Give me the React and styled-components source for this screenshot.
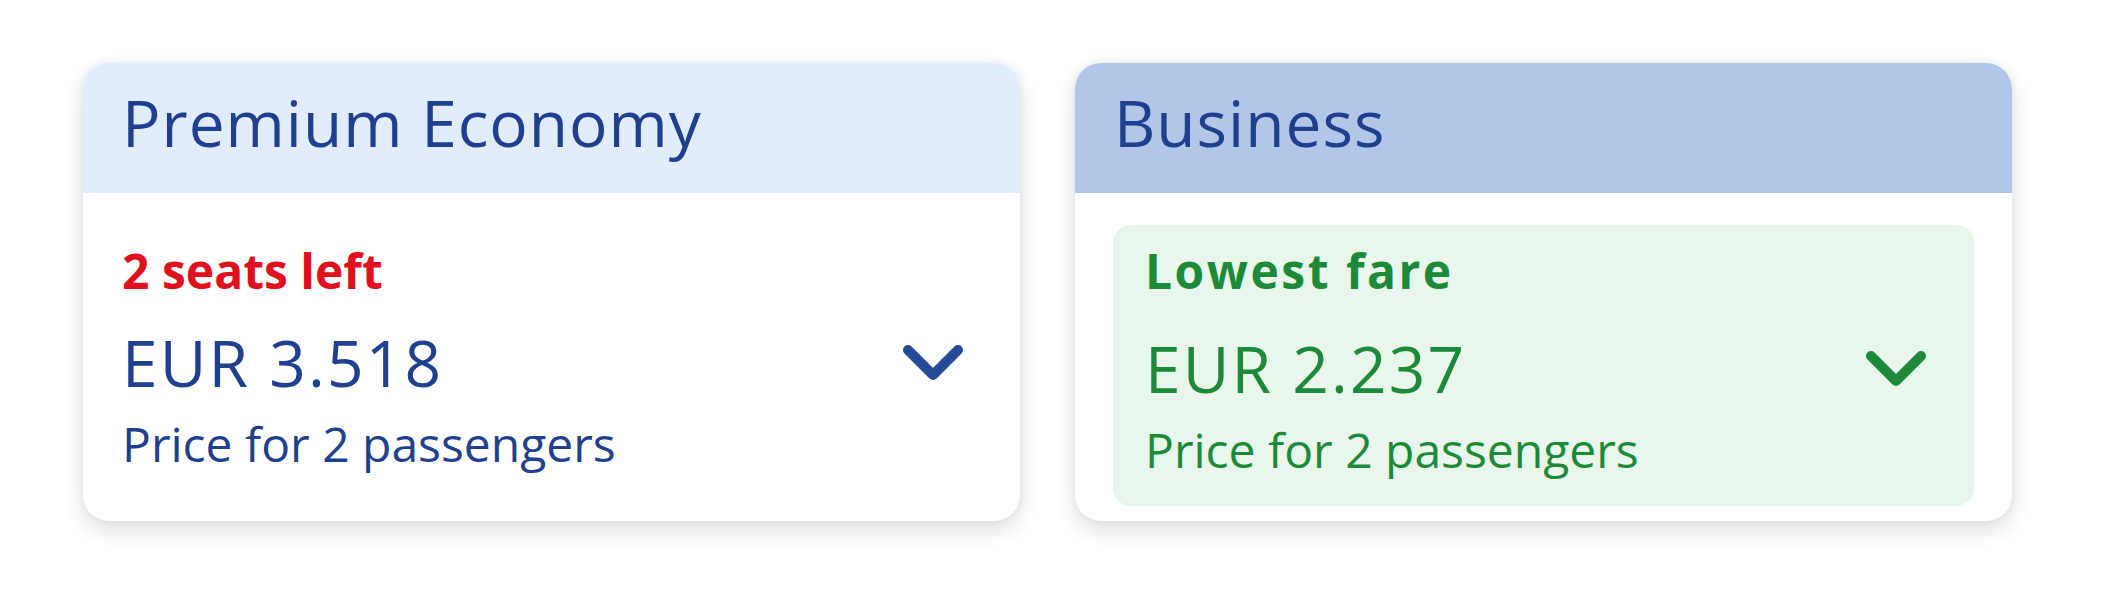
import React from 'react';
import styled, { createGlobalStyle } from 'styled-components';

const GlobalStyle = createGlobalStyle`
  body {
    margin: 0;
    background: #ffffff;
    font-family: 'Open Sans', 'Noto Sans', sans-serif;
  }
`;

const Page = styled.div`
  display: flex;
  gap: 55px;
  padding: 63px 0 40px 83px;
`;

const Card = styled.div`
  width: 937px;
  display: flex;
  flex-direction: column;
  background: #ffffff;
  border-radius: 26px;
  overflow: hidden;
  box-shadow: 0 9px 22px rgba(30, 40, 60, 0.14), 0 0 8px rgba(30, 40, 60, 0.07);
`;

const CabinHeader = styled.div`
  height: 130px;
  box-sizing: border-box;
  padding: 28px 39px 0;
  background: ${(p) => (p.$dark ? '#b2c7e8' : '#e1ecfc')};
`;

const CabinName = styled.h2`
  margin: 0;
  font-size: 64px;
  line-height: 1;
  font-weight: 500;
  letter-spacing: 1px;
  color: #1f3f8f;
`;

const Body = styled.div`
  flex: 1;
  display: flex;
  flex-direction: column;
  padding: ${(p) => (p.$highlighted ? '32px 38px 15px' : '54px 39px 50px')};
`;

const Fare = styled.div`
  flex: 1;
  display: flex;
  flex-direction: column;
  border-radius: 18px;
  padding: ${(p) => (p.$highlighted ? '22px 32px 32px' : '0')};
  background: ${(p) => (p.$highlighted ? '#e8f6ec' : 'transparent')};
  color: ${(p) => (p.$highlighted ? '#1c8a38' : '#1f3f8f')};
`;

const Label = styled.div`
  font-size: 48px;
  line-height: 1;
  font-weight: 700;
  letter-spacing: ${(p) => (p.$success ? '2.5px' : '0')};
  color: ${(p) => (p.$success ? '#1c8a38' : '#e1101e')};
`;

const PriceRow = styled.div`
  display: flex;
  align-items: center;
  justify-content: space-between;
  margin-top: ${(p) => (p.$highlighted ? '42px' : '36px')};
`;

const Price = styled.div`
  font-size: 64px;
  line-height: 1;
  letter-spacing: 2.2px;
`;

const Chevron = styled.svg`
  width: 60px;
  height: 36px;
  margin-right: ${(p) => (p.$highlighted ? '16px' : '18px')};
  flex-shrink: 0;
`;

const Note = styled.div`
  margin-top: 25px;
  font-size: 48px;
  line-height: 1;
`;

const fares = [
  { cabin: 'Premium Economy', tag: '2 seats left', price: 'EUR 3.518' },
  { cabin: 'Business', tag: 'Lowest fare', price: 'EUR 2.237', highlighted: true },
];

function FareCard({ cabin, tag, price, highlighted }) {
  const color = highlighted ? '#1c8a38' : '#264a98';
  return (
    <Card>
      <CabinHeader $dark={highlighted}>
        <CabinName>{cabin}</CabinName>
      </CabinHeader>
      <Body $highlighted={highlighted}>
        <Fare $highlighted={highlighted}>
          <Label $success={highlighted}>{tag}</Label>
          <PriceRow $highlighted={highlighted}>
            <Price>{price}</Price>
            <Chevron $highlighted={highlighted} viewBox="0 0 60 36">
              <polyline
                points="5,5 30,30 55,5"
                fill="none"
                stroke={color}
                strokeWidth="10"
                strokeLinecap="round"
                strokeLinejoin="round"
              />
            </Chevron>
          </PriceRow>
          <Note>Price for 2 passengers</Note>
        </Fare>
      </Body>
    </Card>
  );
}

export default function App() {
  return (
    <>
      <GlobalStyle />
      <Page>
        {fares.map((f) => (
          <FareCard key={f.cabin} {...f} />
        ))}
      </Page>
    </>
  );
}
